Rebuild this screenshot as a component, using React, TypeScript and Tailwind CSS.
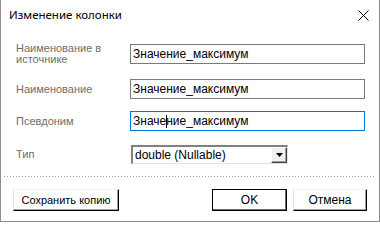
import React from 'react'

const font = { fontFamily: '"Liberation Sans", Arial, sans-serif' }

const rows = [
  { label: 'Наименование в\nисточнике', value: 'Значение_максимум' },
  { label: 'Наименование', value: 'Значение_максимум' }
]

const Btn: React.FC<{ children: React.ReactNode; className?: string; isDefault?: boolean }> = ({ children, className, isDefault }) => (
  <button
    className={`h-[22px] bg-white text-black flex items-center justify-center ${
      isDefault
        ? 'border border-black shadow-[inset_-1px_-1px_0_#696969]'
        : 'border-t border-l border-t-[#f0f0f0] border-l-[#e3e3e3] border-b border-r border-b-black border-r-black shadow-[inset_-1px_-1px_0_#a0a0a0]'
    } ${className ?? ''}`}
  >
    {children}
  </button>
)

const App: React.FC = () => {
  return (
    <div className="w-[380px] h-[222px] bg-white border-x border-b border-[#8c8c8c] flex flex-col" style={font}>
      {/* Title bar */}
      <div className="h-[30px] flex items-center justify-between pl-[8px] pr-[10px]">
        <span className="text-[11.5px] text-black" style={{ fontFamily: '"Noto Sans", "Liberation Sans", sans-serif' }}>
          Изменение колонки
        </span>
        <svg width="11" height="11" viewBox="0 0 11 11" className="mt-[1px]">
          <path d="M0.5 0.5 L10.5 10.5 M10.5 0.5 L0.5 10.5" stroke="#000" strokeWidth="1" fill="none" />
        </svg>
      </div>

      {/* Form */}
      <div className="flex flex-col pl-[15px] pr-[14px] mt-[13px]">
        {rows.map((r, i) => (
          <div key={i} className={`flex items-center ${i === 1 ? 'mt-[14px]' : ''}`}>
            <div className="w-[114px] shrink-0 text-[11px] leading-[11px] text-[#6d6d6d] whitespace-pre-line">{r.label}</div>
            <div className="flex-1 h-[20px] border border-[#7a7a7a] pl-[2px] flex items-center text-[12px] text-black">
              {r.value}
            </div>
          </div>
        ))}

        <div className="flex items-center mt-[12px]">
          <div className="w-[114px] shrink-0 text-[11px] leading-[11px] text-[#6d6d6d]">Псевдоним</div>
          <div className="flex-1 h-[20px] border border-[#0078d7] pl-[2px] flex items-center text-[12px] text-black">
            Значе
            <span className="relative w-0 h-[13px]">
              <span className="absolute left-0 top-0 w-px h-[13px] bg-black" />
            </span>
            ние_максимум
          </div>
        </div>

        <div className="flex items-center mt-[14px]">
          <div className="w-[115px] shrink-0 text-[11px] leading-[11px] text-[#6d6d6d]">Тип</div>
          <div className="w-[157px] h-[19px] flex border-t-2 border-l-2 border-t-[#808080] border-l-[#808080] border-b border-r border-b-[#e3e3e3] border-r-[#e3e3e3] bg-white">
            <div className="flex-1 flex items-center pl-[2px] text-[12px] text-black">double (Nullable)</div>
            <div className="w-[16px] bg-[#f0f0f0] border-t border-l border-white border-b border-r border-b-[#404040] border-r-[#404040] shadow-[inset_-1px_-1px_0_#a0a0a0] flex items-center justify-center">
              <svg width="7" height="4" viewBox="0 0 7 4">
                <path d="M0 0 H7 L3.5 4 Z" fill="#000" />
              </svg>
            </div>
          </div>
        </div>
      </div>

      {/* Separator */}
      <div className="mx-[3px] mt-[12px] h-px bg-[linear-gradient(to_right,#a0a0a0_1px,transparent_1px)] bg-[length:3px_1px]" />

      {/* Buttons */}
      <div className="flex items-center mt-[12px] pl-[12px] pr-[12px]">
        <Btn className="w-[106px] text-[11px]">Сохранить копию</Btn>
        <div className="flex-1" />
        <Btn isDefault className="w-[75px] text-[12px]">OK</Btn>
        <Btn className="w-[74px] ml-[6px] text-[12px]">Отмена</Btn>
      </div>
    </div>
  )
}

export default App
